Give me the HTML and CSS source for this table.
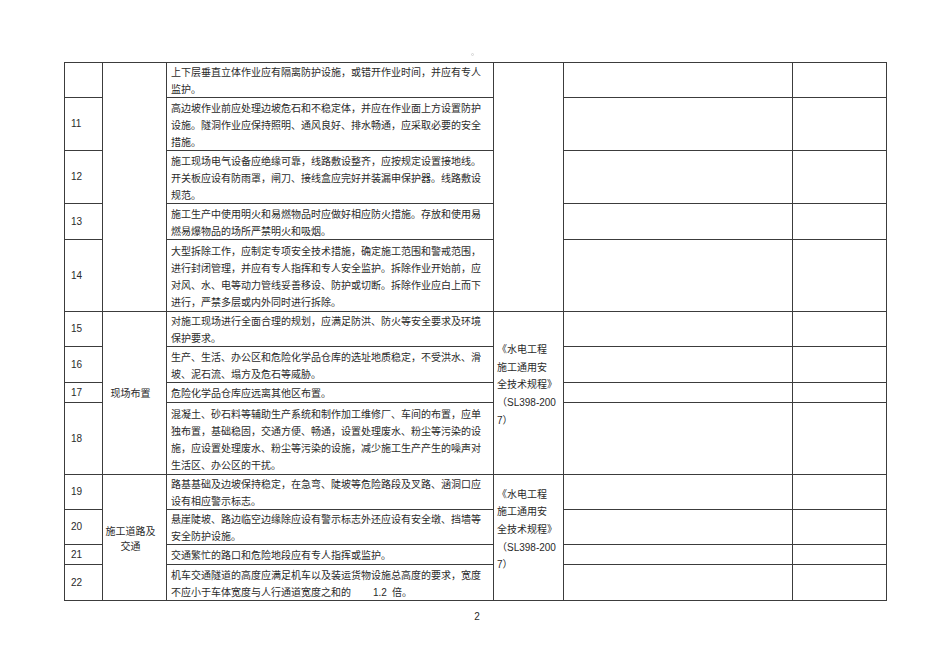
FILE: index.html
```html
<!DOCTYPE html>
<html lang="zh-CN">
<head>
<meta charset="utf-8">
<title>施工安全检查表</title>
<link rel="stylesheet" href="styles.css">
</head>
<body>
<div class="page">
  <div class="header"><span class="mark"></span></div>
  <table class="sheet">
    <colgroup>
      <col class="c-no"><col class="c-cat"><col class="c-text"><col class="c-std"><col class="c-check"><col class="c-note">
    </colgroup>
    <tbody>
      <tr class="h35">
        <td class="no"></td>
        <td class="cat" rowspan="5"></td>
        <td class="text">上下层垂直立体作业应有隔离防护设施，或错开作业时间，并应有专人<br>监护。</td>
        <td class="std" rowspan="5"></td>
        <td></td><td></td>
      </tr>
      <tr class="h53">
        <td class="no">11</td>
        <td class="text">高边坡作业前应处理边坡危石和不稳定体，并应在作业面上方设置防护<br>设施。隧洞作业应保持照明、通风良好、排水畅通，应采取必要的安全<br>措施。</td>
        <td></td><td></td>
      </tr>
      <tr class="h53">
        <td class="no">12</td>
        <td class="text">施工现场电气设备应绝缘可靠，线路敷设整齐，应按规定设置接地线。<br>开关板应设有防雨罩，闸刀、接线盒应完好并装漏申保护器。线路敷设<br>规范。</td>
        <td></td><td></td>
      </tr>
      <tr class="h36">
        <td class="no">13</td>
        <td class="text">施工生产中使用明火和易燃物品时应做好相应防火措施。存放和使用易<br>燃易爆物品的场所严禁明火和吸烟。</td>
        <td></td><td></td>
      </tr>
      <tr class="h72">
        <td class="no">14</td>
        <td class="text">大型拆除工作，应制定专项安全技术措施，确定施工范围和警戒范围，<br>进行封闭管理，并应有专人指挥和专人安全监护。拆除作业开始前，应<br>对风、水、电等动力管线妥善移设、防护或切断。拆除作业应白上而下<br>进行，严禁多层或内外同时进行拆除。</td>
        <td></td><td></td>
      </tr>
      <tr class="h34">
        <td class="no">15</td>
        <td class="cat" rowspan="4">现场布置</td>
        <td class="text">对施工现场进行全面合理的规划，应满足防洪、防火等安全要求及环境<br>保护要求。</td>
        <td class="std" rowspan="4">《水电工程<br>施工通用安<br>全技术规程》<br>（<span class="lat">SL398-200</span><br><span class="lat">7</span>）<br>&nbsp;</td>
        <td></td><td></td>
      </tr>
      <tr class="h36">
        <td class="no">16</td>
        <td class="text">生产、生活、办公区和危险化学品仓库的选址地质稳定，不受洪水、滑<br>坡、泥石流、塌方及危石等威胁。</td>
        <td></td><td></td>
      </tr>
      <tr class="h20">
        <td class="no">17</td>
        <td class="text">危险化学品仓库应远离其他区布置。</td>
        <td></td><td></td>
      </tr>
      <tr class="h72">
        <td class="no">18</td>
        <td class="text">混凝土、砂石料等辅助生产系统和制作加工维修厂、车间的布置，应单<br>独布置，基础稳固，交通方便、畅通，设置处理废水、粉尘等污染的设<br>施，应设置处理废水、粉尘等污染的设施，减少施工生产产生的噪声对<br>生活区、办公区的干扰。</td>
        <td></td><td></td>
      </tr>
      <tr class="h35">
        <td class="no">19</td>
        <td class="cat cat-tight" rowspan="4">施工道路及<br>交通</td>
        <td class="text">路基基础及边坡保持稳定，在急弯、陡坡等危险路段及叉路、涵洞口应<br>设有相应警示标志。</td>
        <td class="std" rowspan="4">《水电工程<br>施工通用安<br>全技术规程》<br>（<span class="lat">SL398-200</span><br><span class="lat">7</span>）<br>&nbsp;</td>
        <td></td><td></td>
      </tr>
      <tr class="h35">
        <td class="no">20</td>
        <td class="text">悬崖陡坡、路边临空边缘除应设有警示标志外还应设有安全墩、挡墙等<br>安全防护设施。</td>
        <td></td><td></td>
      </tr>
      <tr class="h20">
        <td class="no">21</td>
        <td class="text">交通繁忙的路口和危险地段应有专人指挥或监护。</td>
        <td></td><td></td>
      </tr>
      <tr class="h36">
        <td class="no">22</td>
        <td class="text">机车交通隧道的高度应满足机车以及装运货物设施总高度的要求，宽度<br>不应小于车体宽度与人行通道宽度之和的<span class="lat num-gap">1.2</span>倍。</td>
        <td></td><td></td>
      </tr>
    </tbody>
  </table>
  <div class="footer">2</div>
</div>
</body>
</html>
```

FILE: styles.css
```css
html, body {
  margin: 0;
  padding: 0;
  background: #ffffff;
}

body {
  font-family: "Liberation Sans", Arial, sans-serif;
  color: #2a2a2a;
  font-size: 10px;
}

.page {
  width: 822px;
  margin: 0 auto;
}

.header {
  height: 62px;
  display: flex;
  justify-content: center;
  align-items: flex-end;
}

.mark {
  width: 3px;
  height: 3px;
  border: 1px solid #d4d4d4;
  border-radius: 50%;
  margin: 0 6px 6px 0;
  box-sizing: border-box;
}

.sheet {
  width: 822px;
  border-collapse: collapse;
  table-layout: fixed;
}

.c-no { width: 38px; }
.c-cat { width: 64px; }
.c-text { width: 327px; }
.c-std { width: 70px; }
.c-check { width: 229px; }
.c-note { width: 94px; }

.sheet td {
  border: 1px solid #3c3c3c;
  padding: 0;
  vertical-align: middle;
  line-height: 12px;
}

.h20 { height: 20px; }
.h34 { height: 34px; }
.h35 { height: 35px; }
.h36 { height: 36px; }
.h53 { height: 53px; }
.h72 { height: 72px; }

.sheet td.no {
  padding-left: 6px;
  font-size: 10px;
}

.sheet td.cat,
.sheet td.text,
.sheet td.std {
  font-family: "Noto Sans CJK SC", "Liberation Sans", sans-serif;
}

.sheet td.cat {
  text-align: center;
  padding-right: 8px;
  line-height: 16px;
}

.sheet td.cat-tight {
  line-height: 15px;
}

.sheet td.text {
  padding: 0 4px;
  line-height: 17px;
  white-space: nowrap;
  overflow: hidden;
}

.sheet td.std {
  padding: 0 0 0 3px;
  line-height: 17.6px;
  white-space: nowrap;
}

.lat {
  font-family: "Liberation Sans", Arial, sans-serif;
  line-height: 1;
}

.num-gap {
  margin-left: 22px;
  margin-right: 5px;
}

.footer {
  padding-top: 10px;
  text-align: center;
  font-size: 10px;
  line-height: 12px;
  padding-left: 4px;
}
```
